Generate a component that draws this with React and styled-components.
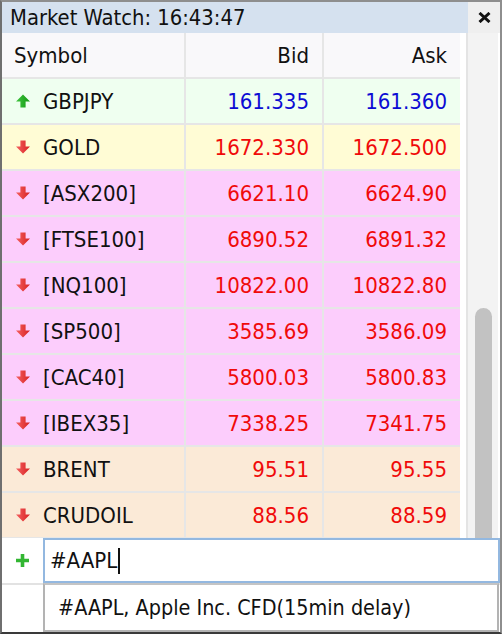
import React from "react";
import styled, { createGlobalStyle } from "styled-components";

const GlobalStyle = createGlobalStyle`
  html, body {
    margin: 0;
    padding: 0;
    background: #ffffff;
  }
  * {
    box-sizing: border-box;
  }
`;

const FONT = `"DejaVu Sans Condensed", "DejaVu Sans", Verdana, sans-serif`;

const Window = styled.div`
  position: relative;
  width: 502px;
  height: 634px;
  border: 2px solid #8e8e8e;
  border-left-color: #6f6f6f;
  border-bottom-color: #3a3a3a;
  background: #ffffff;
  display: flex;
  flex-direction: column;
  font-family: ${FONT};
  font-stretch: condensed;
  overflow: hidden;
`;

const TitleBar = styled.div`
  display: flex;
  height: 31px;
  flex-shrink: 0;
`;

const Title = styled.div`
  flex: 1;
  background: #d5e1ef;
  color: #111;
  font-size: 21.8px;
  padding-left: 8px;
  display: flex;
  align-items: center;
`;

const CloseButton = styled.div`
  width: 32px;
  background: #efefef;
  display: flex;
  align-items: center;
  justify-content: center;
`;

const Body = styled.div`
  display: flex;
  height: 505px;
  flex-shrink: 0;
`;

const Table = styled.div`
  width: 458px;
  display: grid;
  grid-template-columns: 182px 136px 136px;
  grid-auto-rows: 44px;
  gap: 2px;
  background: #e6e6e6;
  align-content: start;
  height: 505px;
  overflow: hidden;
`;

const Gutter = styled.div`
  width: 6px;
  background: #ffffff;
`;

const Track = styled.div`
  width: 32px;
  background: #f3f3f3;
  border-left: 2px solid #e4e4e4;
  padding: 275px 0 0 7px;
`;

const Thumb = styled.div`
  width: 17px;
  height: 232px;
  border-radius: 9px 9px 0 0;
  background: #c2c2c2;
`;

const HeadCell = styled.div`
  background: #f9f8fa;
  color: #111;
  font-size: 22px;
  display: flex;
  align-items: center;
  justify-content: ${(p) => (p.$right ? "flex-end" : "flex-start")};
  padding: 0 13px 0 12px;
`;

const Cell = styled.div`
  background: ${(p) => p.$bg};
  color: ${(p) => p.$color || "#111"};
  font-size: 22px;
  display: flex;
  align-items: center;
  justify-content: ${(p) => (p.$right ? "flex-end" : "flex-start")};
  padding: 0 13px 0 13px;
  gap: 12px;
`;

const InputRow = styled.div`
  display: flex;
  height: 45px;
  flex-shrink: 0;
`;

const AddIcon = styled.div`
  width: 41px;
  display: flex;
  align-items: center;
  justify-content: center;
`;

const SymbolInput = styled.div`
  flex: 1;
  border: 2px solid #93b8e0;
  font-size: 22px;
  color: #111;
  display: flex;
  align-items: center;
  padding-left: 5px;
`;

const Caret = styled.span`
  display: inline-block;
  width: 2px;
  height: 26px;
  background: #111;
  margin-left: 1px;
`;

const Filler = styled.div`
  flex: 1;
  border-top: 2px solid #e2e2e2;
  background: #ffffff;
`;

const Suggestion = styled.div`
  position: absolute;
  left: 41px;
  right: 1px;
  top: 581px;
  height: 49px;
  background: #ffffff;
  border: 2px solid #b3b3b3;
  border-top-color: #c4c4c4;
  font-size: 21.4px;
  color: #111;
  display: flex;
  align-items: center;
  padding-left: 13px;
`;

const ROW_BG = {
  up: "#effff0",
  gold: "#fffcd5",
  index: "#fccdfc",
  oil: "#fbead7",
};

const rows = [
  { sym: "GBPJPY", bid: "161.335", ask: "161.360", up: true, bg: "up" },
  { sym: "GOLD", bid: "1672.330", ask: "1672.500", bg: "gold" },
  { sym: "[ASX200]", bid: "6621.10", ask: "6624.90", bg: "index" },
  { sym: "[FTSE100]", bid: "6890.52", ask: "6891.32", bg: "index" },
  { sym: "[NQ100]", bid: "10822.00", ask: "10822.80", bg: "index" },
  { sym: "[SP500]", bid: "3585.69", ask: "3586.09", bg: "index" },
  { sym: "[CAC40]", bid: "5800.03", ask: "5800.83", bg: "index" },
  { sym: "[IBEX35]", bid: "7338.25", ask: "7341.75", bg: "index" },
  { sym: "BRENT", bid: "95.51", ask: "95.55", bg: "oil" },
  { sym: "CRUDOIL", bid: "88.56", ask: "88.59", bg: "oil" },
];

const Arrow = ({ up }) => (
  <svg width="16" height="16" viewBox="0 0 16 16">
    <defs>
      <linearGradient id={up ? "gu" : "gd"} x1="0" y1="0" x2="1" y2="0">
        <stop offset="0" stopColor={up ? "#3fc43f" : "#f46060"} />
        <stop offset="1" stopColor={up ? "#129a12" : "#d82222"} />
      </linearGradient>
    </defs>
    {up ? (
      <path d="M8 1.5 L15 8.5 L10.6 8.5 L10.6 14.5 L5.4 14.5 L5.4 8.5 L1 8.5 Z" fill="url(#gu)" />
    ) : (
      <path d="M5.4 1.5 L10.6 1.5 L10.6 7.5 L15 7.5 L8 14.5 L1 7.5 L5.4 7.5 Z" fill="url(#gd)" />
    )}
  </svg>
);

const CloseIcon = () => (
  <svg width="13" height="11" viewBox="0 0 13 11">
    <path d="M1.5 1 L11.5 10 M11.5 1 L1.5 10" stroke="#111" strokeWidth="3" />
  </svg>
);

const PlusIcon = () => (
  <svg width="15" height="15" viewBox="0 0 15 15">
    <path d="M7.5 1 V14 M1 7.5 H14" stroke="#32b632" strokeWidth="3.6" />
  </svg>
);

const App = () => {
  return (
    <>
      <GlobalStyle />
      <Window>
        <TitleBar>
          <Title>Market Watch: 16:43:47</Title>
          <CloseButton>
            <CloseIcon />
          </CloseButton>
        </TitleBar>
        <Body>
          <Table>
            <HeadCell>Symbol</HeadCell>
            <HeadCell $right>Bid</HeadCell>
            <HeadCell $right>Ask</HeadCell>
            {rows.map((r) => {
              const bg = ROW_BG[r.bg];
              const color = r.up ? "#0c0cd4" : "#f00a0a";
              return (
                <React.Fragment key={r.sym}>
                  <Cell $bg={bg}>
                    <Arrow up={r.up} />
                    {r.sym}
                  </Cell>
                  <Cell $bg={bg} $color={color} $right>
                    {r.bid}
                  </Cell>
                  <Cell $bg={bg} $color={color} $right>
                    {r.ask}
                  </Cell>
                </React.Fragment>
              );
            })}
          </Table>
          <Gutter />
          <Track>
            <Thumb />
          </Track>
        </Body>
        <InputRow>
          <AddIcon>
            <PlusIcon />
          </AddIcon>
          <SymbolInput>
            #AAPL
            <Caret />
          </SymbolInput>
        </InputRow>
        <Filler />
        <Suggestion>#AAPL, Apple Inc. CFD(15min delay)</Suggestion>
      </Window>
    </>
  );
};

export default App;
